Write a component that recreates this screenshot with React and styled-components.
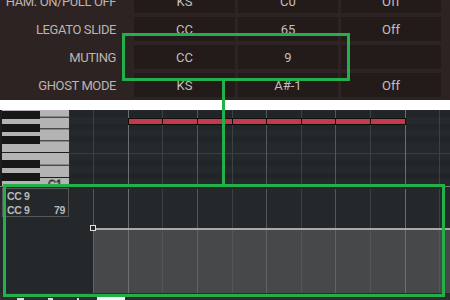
import React from 'react';
import styled, { createGlobalStyle } from 'styled-components';

const GlobalStyle = createGlobalStyle`
  html, body {
    margin: 0;
    padding: 0;
    background: #ffffff;
  }
`;

const rows = [
  { label: 'HAM. ON/PULL OFF', type: 'KS', value: 'C0', state: 'Off' },
  { label: 'LEGATO SLIDE', type: 'CC', value: '65', state: 'Off' },
  { label: 'MUTING', type: 'CC', value: '9', state: '' },
  { label: 'GHOST MODE', type: 'KS', value: 'A#-1', state: 'Off' },
];

// grid columns in page x
const beatLines = [
  { x: 93, tone: 'dim' },
  { x: 128, tone: 'bright' },
  { x: 162, tone: 'dim' },
  { x: 197, tone: 'mid' },
  { x: 232, tone: 'dim' },
  { x: 266, tone: 'mid' },
  { x: 301, tone: 'dim' },
  { x: 335, tone: 'mid' },
  { x: 370, tone: 'dim' },
  { x: 405, tone: 'bright' },
  { x: 439, tone: 'dim' },
];

const lineColor = { dim: '#3d4044', mid: '#55585b', bright: '#6c6e70' };
const fillLineColor = { dim: '#535455', mid: '#626364', bright: '#707172' };

const noteEdges = [128, 162, 197, 232, 266, 301, 335, 370, 405];

const blackKeys = [1, 14, 26, 50, 63];
const keySplits = [6.7, 18.3, 30.3, 54.7, 67];

const App = () => {
  return (
    <>
      <GlobalStyle />
      <Frame>
        <ArticTable>
          <TableGrid>
            {rows.map((r) => (
              <React.Fragment key={r.label}>
                <RowLabel>{r.label}</RowLabel>
                <Cell>{r.type}</Cell>
                <Cell>{r.value}</Cell>
                <Cell>{r.state}</Cell>
              </React.Fragment>
            ))}
          </TableGrid>
        </ArticTable>

        <Gap />

        <Roll>
          <Keyboard>
            <svg width="70" height="76" viewBox="0 0 70 76">
              <rect x="0" y="0" width="70" height="76" fill="#b4b4b4" />
              <rect x="0" y="0" width="2" height="76" fill="#1c1d1f" />
              {keySplits.map((y) => (
                <rect key={y} x="40" y={y} width="29" height="1" fill="#1e1e1e" />
              ))}
              <rect x="2" y="42" width="67" height="1" fill="#1e1e1e" />
              {blackKeys.map((y) => (
                <rect key={y} x="2" y={y} width="38" height="8" fill="#171717" />
              ))}
              <text x="48" y="78" fontFamily="Liberation Sans, sans-serif" fontSize="11" fill="none" stroke="#333" strokeWidth="0.8">C1</text>
              <rect x="69" y="0" width="1" height="76" fill="#2a2c2f" />
            </svg>
          </Keyboard>
          <NoteGrid>
            <svg width="380" height="76" viewBox="70 0 380 76">
              <rect x="70" y="0" width="380" height="76" fill="#26292c" />
              {blackKeys.map((y) => (
                <rect key={y} x="70" y={y} width="380" height="6" fill="#222528" />
              ))}
              <rect x="70" y="43" width="380" height="1" fill="#3a3d41" />
              {beatLines.map((l) => (
                <rect key={l.x} x={l.x} y="0" width="1" height="76" fill={lineColor[l.tone]} />
              ))}
              {noteEdges.slice(0, -1).map((x, i) => (
                <rect
                  key={x}
                  x={x + 0.5}
                  y="8.5"
                  width={noteEdges[i + 1] - x}
                  height="6"
                  fill="#c13b4c"
                  stroke="#0e0e0e"
                  strokeWidth="1"
                />
              ))}
            </svg>
          </NoteGrid>
        </Roll>

        <CCLane>
          <svg width="450" height="106" viewBox="0 0 450 106">
            <rect x="0" y="0" width="450" height="106" fill="#25282b" />
            <rect x="93" y="43" width="357" height="63" fill="#474849" />
            {beatLines.map((l) => (
              <React.Fragment key={l.x}>
                <rect x={l.x} y="2" width="1" height="41" fill={l.x === 93 ? '#55585b' : lineColor[l.tone]} />
                <rect x={l.x} y="43" width="1" height="63" fill={l.x === 93 ? '#606162' : fillLineColor[l.tone]} />
              </React.Fragment>
            ))}
            <rect x="93" y="41" width="357" height="2" fill="#a9a9a9" />
            <rect x="90.5" y="38.5" width="5" height="5" fill="#25282b" stroke="#e0e0e0" strokeWidth="1" />
          </svg>
          <LaneLabel>
            <LaneRow>CC 9</LaneRow>
            <LaneRow>
              <span>CC 9</span>
              <span>79</span>
            </LaneRow>
          </LaneLabel>
        </CCLane>

        <Toolbar>
          <ToolMark $w={7} />
          <ToolMark $w={5} />
          <ToolMark $w={2} />
          <ToolChip />
        </Toolbar>

        <Highlight $x={122} $y={33} $w={228} $h={48} />
        <Connector />
        <Highlight $x={3} $y={184} $w={442} $h={113} />
      </Frame>
    </>
  );
};

export default App;

// Styled Components

const Frame = styled.div`
  position: relative;
  width: 450px;
  height: 300px;
  overflow: hidden;
  display: flex;
  flex-direction: column;
  font-family: Roboto, "Liberation Sans", sans-serif;
`;

const ArticTable = styled.div`
  height: 100px;
  flex: none;
  background: #2d2322;
  overflow: hidden;
`;

const TableGrid = styled.div`
  margin-top: -11px;
  display: grid;
  grid-template-columns: 131px 101px 100px 100px;
  grid-auto-rows: 24px;
  column-gap: 3px;
  row-gap: 4px;
`;

const RowLabel = styled.div`
  display: flex;
  align-items: center;
  justify-content: flex-end;
  padding-right: 15px;
  font-size: 13px;
  letter-spacing: -0.4px;
  color: #bcb5b3;
  white-space: nowrap;
`;

const Cell = styled.div`
  display: flex;
  align-items: center;
  justify-content: center;
  background: #231b1a;
  font-size: 13px;
  color: #c6bfbd;
`;

const Gap = styled.div`
  height: 10px;
  flex: none;
  background: #ffffff;
`;

const Roll = styled.div`
  height: 76px;
  flex: none;
  display: flex;
  overflow: hidden;
`;

const Keyboard = styled.div`
  width: 70px;
  flex: none;
  line-height: 0;
  overflow: hidden;
`;

const NoteGrid = styled.div`
  flex: 1;
  line-height: 0;
  overflow: hidden;
`;

const CCLane = styled.div`
  position: relative;
  height: 106px;
  flex: none;
  border-top: 1px solid #7a7b7c;
  line-height: 0;
`;

const LaneLabel = styled.div`
  position: absolute;
  left: 2px;
  top: 1px;
  width: 67px;
  height: 29px;
  border: 1px solid #55585b;
  background: #25282b;
  padding: 2px 3px 0 4px;
  box-sizing: border-box;
  display: flex;
  flex-direction: column;
  gap: 3px;
  font-family: "Liberation Sans", Arial, sans-serif;
  font-weight: bold;
  font-size: 10.5px;
  line-height: 11px;
  color: #b9b9b9;
  letter-spacing: -0.4px;
`;

const LaneRow = styled.div`
  display: flex;
  justify-content: space-between;
`;

const Toolbar = styled.div`
  height: 8px;
  flex: none;
  background: #2a2c2f;
  display: flex;
  align-items: flex-end;
  gap: 24px;
  padding-left: 17px;
`;

const ToolMark = styled.div`
  width: ${(p) => p.$w}px;
  height: 3px;
  background: #d8d8d8;
`;

const ToolChip = styled.div`
  width: 28px;
  height: 4px;
  margin-left: -6px;
  background: #f4f4f4;
`;

const Highlight = styled.div`
  position: absolute;
  left: ${(p) => p.$x}px;
  top: ${(p) => p.$y}px;
  width: ${(p) => p.$w}px;
  height: ${(p) => p.$h}px;
  border: 3px solid #22b04b;
  box-sizing: border-box;
  pointer-events: none;
`;

const Connector = styled.div`
  position: absolute;
  left: 222px;
  top: 81px;
  width: 3px;
  height: 103px;
  background: #22b04b;
`;
